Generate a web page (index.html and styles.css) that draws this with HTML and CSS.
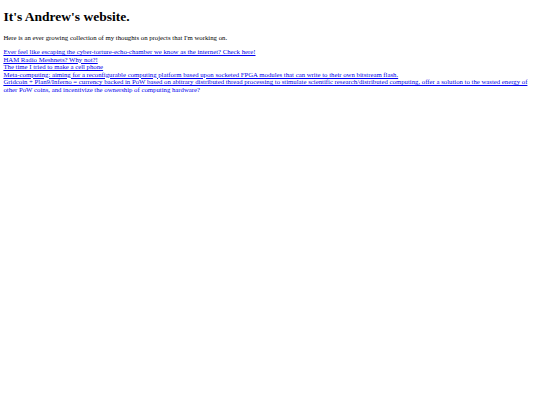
FILE: index.html
```html
<!DOCTYPE html>
<html>
<head>
<meta charset="utf-8">
<title>Andrew's website</title>
<link rel="stylesheet" href="styles.css">
</head>
<body>
<h1 class="title">It's Andrew's website.</h1>
<p class="intro">Here is an ever growing collection of my thoughts on projects that I'm working on.</p>
<div class="links">
<a href="#">Ever feel like escaping the cyber-torture-echo-chamber we know as the internet? Check here!</a><br>
<a href="#">HAM Radio Meshnets? Why not?!</a><br>
<a href="#">The time I tried to make a cell phone</a><br>
<a href="#">Meta-computing: aiming for a reconfigurable computing platform based upon socketed FPGA modules that can write to their own bitstream flash.</a><br>
<a href="#">Gridcoin + Plan9/Inferno = currency backed in PoW based on abitrary distributed thread processing to stimulate scientific research/distributed computing, offer a solution to the wasted energy of other PoW coins, and incentivize the ownership of computing hardware?</a>
</div>
</body>
</html>
```
FILE: styles.css
```css
html { background: #fff; }
body {
  margin: 0;
  padding: 0 3.4px;
  font-family: "Liberation Serif", "Times New Roman", serif;
  font-size: 6.75px;
  line-height: 7.5px;
  color: #000;
}
.title {
  font-size: 13.5px;
  line-height: 15px;
  font-weight: bold;
  margin: 9px 0 10px;
}
.intro {
  margin: 0 0 6.5px;
}
.links a {
  color: #0000ee;
  text-decoration: underline;
}
```
